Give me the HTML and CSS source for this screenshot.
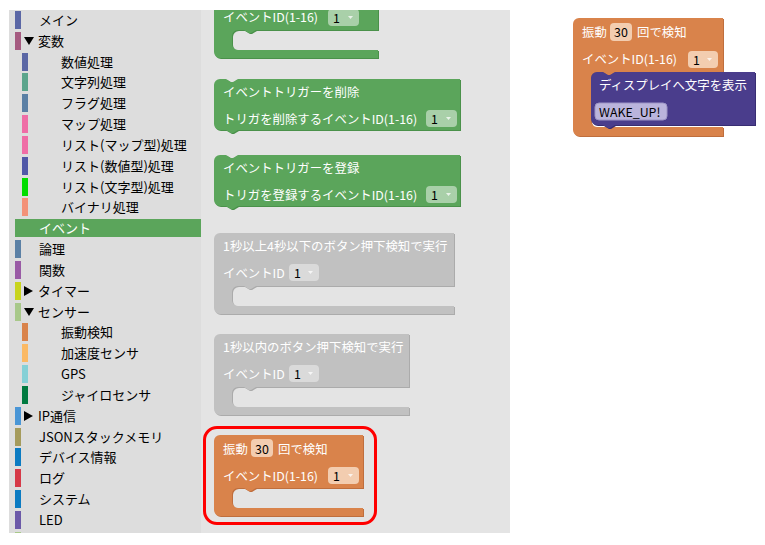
FILE: index.html
```html
<!DOCTYPE html>
<html lang="ja">
<head>
  <meta charset="UTF-8">
  <title>ブロックエディタ</title>
  <link rel="stylesheet" href="styles.css">
</head>
<body>

<div class="page">
  <div class="editor">

    <div class="toolbox">
      <div class="cat"><span class="bar c-main"></span><span class="label">メイン</span></div>
      <div class="cat"><span class="bar c-var"></span><span class="arrow open"></span><span class="label">変数</span></div>
      <div class="cat sub"><span class="bar c-main"></span><span class="label">数値処理</span></div>
      <div class="cat sub"><span class="bar c-text"></span><span class="label">文字列処理</span></div>
      <div class="cat sub"><span class="bar c-logic"></span><span class="label">フラグ処理</span></div>
      <div class="cat sub"><span class="bar c-map"></span><span class="label">マップ処理</span></div>
      <div class="cat sub"><span class="bar c-map"></span><span class="label">リスト(マップ型)処理</span></div>
      <div class="cat sub"><span class="bar c-numlist"></span><span class="label">リスト(数値型)処理</span></div>
      <div class="cat sub"><span class="bar c-strlist"></span><span class="label">リスト(文字型)処理</span></div>
      <div class="cat sub"><span class="bar c-binary"></span><span class="label">バイナリ処理</span></div>
      <div class="cat selected"><span class="bar c-event"></span><span class="label">イベント</span></div>
      <div class="cat"><span class="bar c-logic"></span><span class="label">論理</span></div>
      <div class="cat"><span class="bar c-func"></span><span class="label">関数</span></div>
      <div class="cat"><span class="bar c-timer"></span><span class="arrow closed"></span><span class="label">タイマー</span></div>
      <div class="cat"><span class="bar c-sensor"></span><span class="arrow open"></span><span class="label">センサー</span></div>
      <div class="cat sub"><span class="bar c-shake"></span><span class="label">振動検知</span></div>
      <div class="cat sub"><span class="bar c-accel"></span><span class="label">加速度センサ</span></div>
      <div class="cat sub"><span class="bar c-gps"></span><span class="label">GPS</span></div>
      <div class="cat sub"><span class="bar c-gyro"></span><span class="label">ジャイロセンサ</span></div>
      <div class="cat"><span class="bar c-ip"></span><span class="arrow closed"></span><span class="label">IP通信</span></div>
      <div class="cat"><span class="bar c-json"></span><span class="label">JSONスタックメモリ</span></div>
      <div class="cat"><span class="bar c-device"></span><span class="label">デバイス情報</span></div>
      <div class="cat"><span class="bar c-log"></span><span class="label">ログ</span></div>
      <div class="cat"><span class="bar c-device"></span><span class="label">システム</span></div>
      <div class="cat"><span class="bar c-led"></span><span class="label">LED</span></div>
      <!-- 下に続くカテゴリ (見切れ) -->
      <div class="cat"><span class="bar c-sensor"></span></div>
    </div>

    <div class="workspace">
      <svg class="canvas" width="309" height="523">

        <!-- イベント (上が切れている) -->
        <g transform="translate(13,-33)">
          <path class="shade green-dark" d="M0,6 A6,6 0 0 1 6,0 H164 V53 H42 l-5,3 -2,0 -5,-3 H24 A6,6 0 0 0 18,59 V67 A6,6 0 0 0 24,73 H164 V81 H6 A6,6 0 0 1 0,75 Z"/>
          <path class="green" d="M0,6 A6,6 0 0 1 6,0 H164 V53 H42 l-5,3 -2,0 -5,-3 H24 A6,6 0 0 0 18,59 V67 A6,6 0 0 0 24,73 H164 V81 H6 A6,6 0 0 1 0,75 Z"/>
          <text class="txt" x="9" y="40">イベントID(1-16)</text>
          <rect class="fld-green" x="114" y="32" width="31" height="17" rx="4"/>
          <text class="val" x="119" y="40.5">1</text>
          <path class="drop" d="M134,39 h5 l-2.5,3 z"/>
        </g>

        <!-- イベントトリガーを削除 -->
        <g transform="translate(13,69)">
          <path class="shade green-dark" d="M0,6 A6,6 0 0 1 6,0 H12 l5,3 2,0 5,-3 H246 V51 H24 l-5,3 -2,0 -5,-3 H6 A6,6 0 0 1 0,45 Z"/>
          <path class="green" d="M0,6 A6,6 0 0 1 6,0 H12 l5,3 2,0 5,-3 H246 V51 H24 l-5,3 -2,0 -5,-3 H6 A6,6 0 0 1 0,45 Z"/>
          <text class="txt" x="9" y="13">イベントトリガーを削除</text>
          <text class="txt" x="9" y="40">トリガを削除するイベントID(1-16)</text>
          <rect class="fld-green" x="212" y="31" width="31" height="17" rx="4"/>
          <text class="val" x="217" y="39.5">1</text>
          <path class="drop" d="M232,38 h5 l-2.5,3 z"/>
        </g>

        <!-- イベントトリガーを登録 -->
        <g transform="translate(13,145)">
          <path class="shade green-dark" d="M0,6 A6,6 0 0 1 6,0 H12 l5,3 2,0 5,-3 H246 V51 H24 l-5,3 -2,0 -5,-3 H6 A6,6 0 0 1 0,45 Z"/>
          <path class="green" d="M0,6 A6,6 0 0 1 6,0 H12 l5,3 2,0 5,-3 H246 V51 H24 l-5,3 -2,0 -5,-3 H6 A6,6 0 0 1 0,45 Z"/>
          <text class="txt" x="9" y="13">イベントトリガーを登録</text>
          <text class="txt" x="9" y="40">トリガを登録するイベントID(1-16)</text>
          <rect class="fld-green" x="212" y="31" width="31" height="17" rx="4"/>
          <text class="val" x="217" y="39.5">1</text>
          <path class="drop" d="M232,38 h5 l-2.5,3 z"/>
        </g>

        <!-- 1秒以上4秒以下 (無効) -->
        <g transform="translate(13,223)">
          <path class="shade gray-dark" d="M0,6 A6,6 0 0 1 6,0 H240 V53 H42 l-5,3 -2,0 -5,-3 H24 A6,6 0 0 0 18,59 V67 A6,6 0 0 0 24,73 H240 V81 H6 A6,6 0 0 1 0,75 Z"/>
          <path class="gray" d="M0,6 A6,6 0 0 1 6,0 H240 V53 H42 l-5,3 -2,0 -5,-3 H24 A6,6 0 0 0 18,59 V67 A6,6 0 0 0 24,73 H240 V81 H6 A6,6 0 0 1 0,75 Z"/>
          <text class="txt" x="9" y="13">1秒以上4秒以下のボタン押下検知で実行</text>
          <text class="txt" x="9" y="40">イベントID</text>
          <rect class="fld-gray" x="75" y="31" width="30" height="17" rx="4"/>
          <text class="val" x="80" y="39.5">1</text>
          <path class="drop" d="M94,38 h5 l-2.5,3 z"/>
        </g>

        <!-- 1秒以内 (無効) -->
        <g transform="translate(13,324)">
          <path class="shade gray-dark" d="M0,6 A6,6 0 0 1 6,0 H195 V53 H42 l-5,3 -2,0 -5,-3 H24 A6,6 0 0 0 18,59 V67 A6,6 0 0 0 24,73 H195 V81 H6 A6,6 0 0 1 0,75 Z"/>
          <path class="gray" d="M0,6 A6,6 0 0 1 6,0 H195 V53 H42 l-5,3 -2,0 -5,-3 H24 A6,6 0 0 0 18,59 V67 A6,6 0 0 0 24,73 H195 V81 H6 A6,6 0 0 1 0,75 Z"/>
          <text class="txt" x="9" y="13">1秒以内のボタン押下検知で実行</text>
          <text class="txt" x="9" y="40">イベントID</text>
          <rect class="fld-gray" x="75" y="31" width="30" height="17" rx="4"/>
          <text class="val" x="80" y="39.5">1</text>
          <path class="drop" d="M94,38 h5 l-2.5,3 z"/>
        </g>

        <!-- 振動検知 -->
        <g transform="translate(13,425)">
          <path class="shade orange-dark" d="M0,6 A6,6 0 0 1 6,0 H149 V53 H42 l-5,3 -2,0 -5,-3 H24 A6,6 0 0 0 18,59 V67 A6,6 0 0 0 24,73 H149 V81 H6 A6,6 0 0 1 0,75 Z"/>
          <path class="orange" d="M0,6 A6,6 0 0 1 6,0 H149 V53 H42 l-5,3 -2,0 -5,-3 H24 A6,6 0 0 0 18,59 V67 A6,6 0 0 0 24,73 H149 V81 H6 A6,6 0 0 1 0,75 Z"/>
          <text class="txt" x="9" y="13.5">振動</text>
          <rect class="fld-orange" x="37" y="4" width="22" height="18" rx="4"/>
          <text class="val" x="41" y="13.5">30</text>
          <text class="txt" x="64" y="13.5">回で検知</text>
          <text class="txt" x="9" y="40.5">イベントID(1-16)</text>
          <rect class="fld-orange" x="114" y="32" width="31" height="17" rx="4"/>
          <text class="val" x="119" y="40.5">1</text>
          <path class="drop" d="M134,39 h5 l-2.5,3 z"/>
        </g>
      </svg>

      <div class="mark"></div>
    </div>
  </div>

  <div class="preview">
    <svg class="canvas" width="186" height="124">
      <g>
        <path class="shade orange-dark" d="M0,6 A6,6 0 0 1 6,0 H150 V54 H42 l-5,3 -2,0 -5,-3 H24 A6,6 0 0 0 18,60 V103 A6,6 0 0 0 24,109 H150 V118 H6 A6,6 0 0 1 0,112 Z"/>
        <path class="orange" d="M0,6 A6,6 0 0 1 6,0 H150 V54 H42 l-5,3 -2,0 -5,-3 H24 A6,6 0 0 0 18,60 V103 A6,6 0 0 0 24,109 H150 V118 H6 A6,6 0 0 1 0,112 Z"/>
        <text class="txt" x="9" y="14">振動</text>
        <rect class="fld-orange" x="37" y="5" width="22" height="18" rx="4"/>
        <text class="val" x="41" y="14">30</text>
        <text class="txt" x="64" y="14">回で検知</text>
        <text class="txt" x="9" y="41">イベントID(1-16)</text>
        <rect class="fld-orange" x="115" y="33" width="30" height="17" rx="4"/>
        <text class="val" x="120" y="41.5">1</text>
        <path class="drop" d="M134,40 h5 l-2.5,3 z"/>
      </g>
      <g transform="translate(18,54)">
        <path class="shade purple-dark" d="M0,6 A6,6 0 0 1 6,0 H12 l5,3 2,0 5,-3 H164 V53 H24 l-5,3 -2,0 -5,-3 H6 A6,6 0 0 1 0,47 Z"/>
        <path class="purple" d="M0,6 A6,6 0 0 1 6,0 H12 l5,3 2,0 5,-3 H164 V53 H24 l-5,3 -2,0 -5,-3 H6 A6,6 0 0 1 0,47 Z"/>
        <text class="txt" x="8" y="13">ディスプレイへ文字を表示</text>
        <rect class="fld-purple" x="4" y="31" width="72" height="17" rx="4"/>
        <text class="val" x="8" y="39.5">WAKE_UP!</text>
      </g>
    </svg>
  </div>
</div>

</body>
</html>
```

FILE: styles.css
```css
body {
  margin: 0;
  background: #fff;
  font-family: "Noto Sans CJK JP", "Noto Sans", sans-serif;
  color: #000;
}
.page {
  display: flex;
  align-items: flex-start;
}
.editor {
  display: flex;
  margin: 10px 0 0 9px;
  height: 523px;
}

/* ツールボックス */
.toolbox {
  width: 192px;
  background: #dddddd;
  padding-top: 1px;
  overflow: hidden;
  font-size: 13px;
}
.cat {
  display: flex;
  align-items: center;
  height: 18px;
  line-height: 18px;
  margin: 0 0 2.83px 6px;
  white-space: nowrap;
}
.cat.sub {
  margin-left: 13px;
}
.bar {
  width: 6px;
  height: 18px;
  flex: none;
}
.label {
  padding-left: 18px;
}
.sub .label {
  padding-left: 33px;
}
.arrow {
  flex: none;
  width: 0;
  height: 0;
  margin-left: 3px;
}
.arrow.open {
  border-left: 5px solid transparent;
  border-right: 5px solid transparent;
  border-top: 8px solid #000;
}
.arrow.closed {
  border-top: 5px solid transparent;
  border-bottom: 5px solid transparent;
  border-left: 9px solid #000;
}
.arrow + .label {
  padding-left: 4px;
}
.arrow.closed + .label {
  padding-left: 5px;
}
.cat.selected {
  background: #5ba55b;
  color: #fff;
}

.c-main { background: #5b67a5; }
.c-var { background: #a55b80; }
.c-text { background: #5ba58c; }
.c-logic { background: #5b80a5; }
.c-map { background: #ef6da6; }
.c-numlist { background: #5058a8; }
.c-strlist { background: #00dd00; }
.c-binary { background: #f39178; }
.c-event { background: #5ba55b; }
.c-func { background: #995ba5; }
.c-timer { background: #c8d41e; }
.c-sensor { background: #a8c88a; }
.c-shake { background: #d9834b; }
.c-accel { background: #fbb964; }
.c-gps { background: #85d0d6; }
.c-gyro { background: #007a40; }
.c-ip { background: #4a96d6; }
.c-json { background: #a59b5c; }
.c-device { background: #0b7bc2; }
.c-log { background: #d63a48; }
.c-led { background: #6c5aa8; }

/* ワークスペース */
.workspace {
  position: relative;
  width: 309px;
  height: 523px;
  background: #e4e4e4;
  overflow: hidden;
}
.canvas {
  display: block;
}
.mark {
  position: absolute;
  left: 2px;
  top: 416px;
  width: 174px;
  height: 99px;
  box-sizing: border-box;
  border: 3px solid #ff0000;
  border-radius: 14px;
}
.preview {
  margin: 18px 0 0 63px;
}

/* ブロック */
.shade {
  transform: translate(1px, 1px);
}
.green { fill: #5ba55b; }
.green-dark { fill: #4a914a; }
.gray { fill: #c1c1c1; }
.gray-dark { fill: #ababab; }
.orange { fill: #d9834b; }
.orange-dark { fill: #bf6e3d; }
.purple { fill: #4a3d8c; }
.purple-dark { fill: #382d72; }

.txt,
.val {
  font-family: "Noto Sans CJK JP", "Noto Sans", sans-serif;
  font-size: 12.4px;
  dominant-baseline: central;
}
.txt { fill: #fff; }
.val { fill: #000; }
.fld-green { fill: #a9d0a9; }
.fld-gray { fill: #dadada; }
.fld-orange { fill: #f3cdb0; }
.fld-purple { fill: #bab4dc; stroke: #9d95c6; stroke-width: 1; }
.drop { fill: #fff; fill-opacity: 0.75; }
```
